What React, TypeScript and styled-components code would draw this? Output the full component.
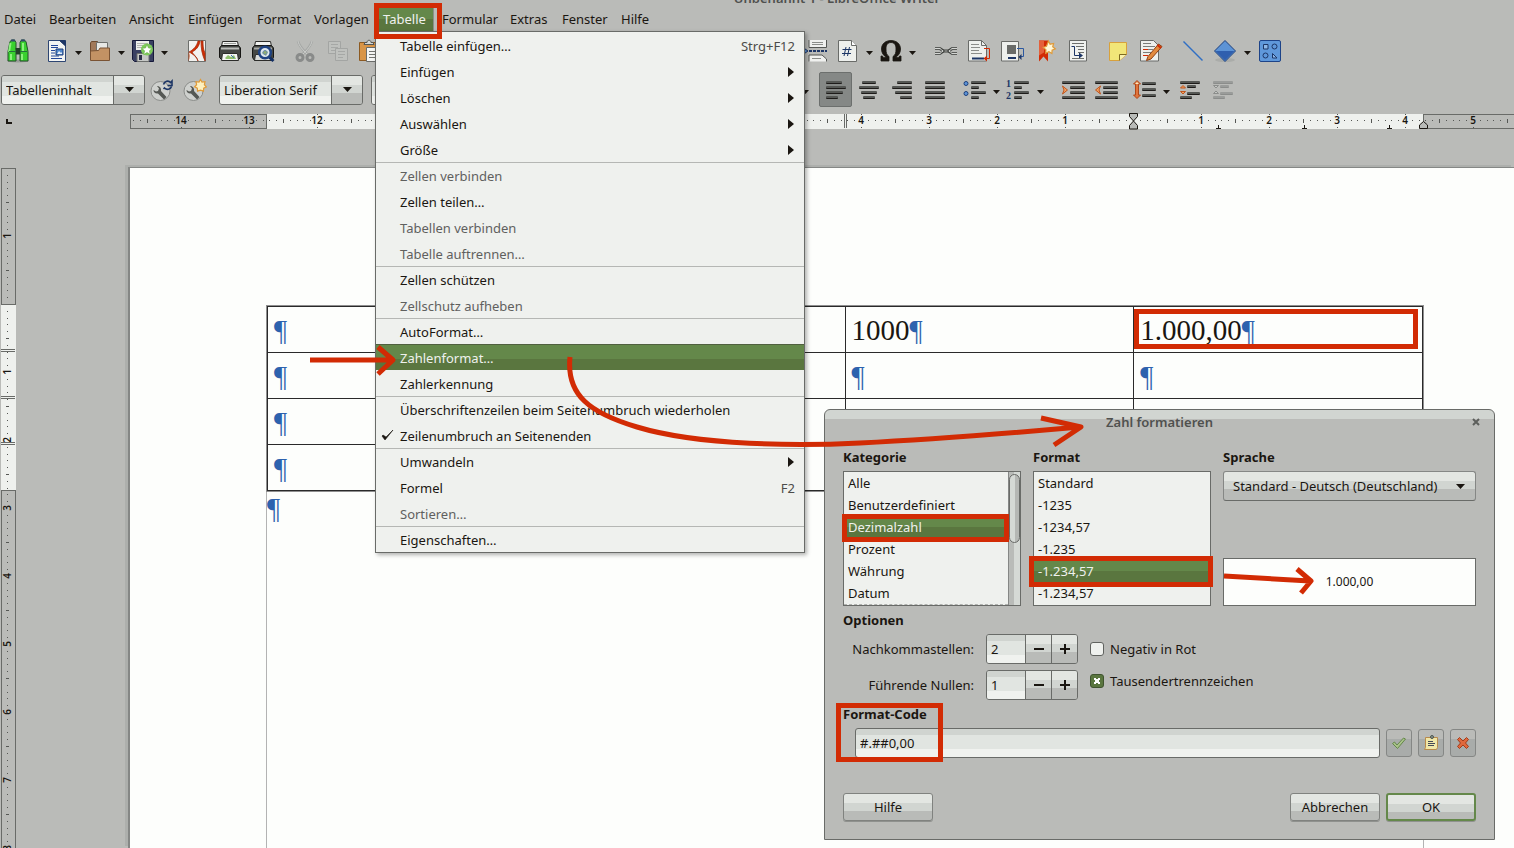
import React from "react";
import styled, { createGlobalStyle, css } from "styled-components";

const c = {
  chrome: "#babbb8",
  light: "#eff1ee",
  edge: "#696b68",
  line: "#b5b7b4",
  ink: "#1a1611",
  faint: "#5f605e",
  green: "#64884a",
  greenDark: "#5a763f",
  red: "#d22b04",
  mark: "#2d62ae",
};

const GlobalStyle = createGlobalStyle`
  *, *::before, *::after { box-sizing: border-box; }
  body { margin: 0; background: ${c.chrome}; overflow: hidden; }
  body, button, input, select {
    font-family: "Noto Sans", "Open Sans", sans-serif;
    font-size: 13px;
    line-height: 18px;
    color: ${c.ink};
  }
  button, input, select { margin: 0; padding: 0; border: 0; outline: 0; }
  ul { list-style: none; margin: 0; padding: 0; }
`;

const Shell = styled.div`
  position: relative;
  display: flex;
  flex-direction: column;
  height: 100vh;
  overflow: hidden;
`;

const TitleBar = styled.header`
  display: flex;
  flex: none;
  align-items: flex-end;
  justify-content: center;
  height: 7px;
  padding: 0 0 3px 160px;
  overflow: hidden;
  font-size: 13px;
  font-weight: 600;
  line-height: 12px;
  color: #4f504e;
`;

const MenuBar = styled.nav`
  display: flex;
  flex: none;
  height: 24px;
`;

const MenuTitle = styled.button<{ $w: number; $open?: boolean }>`
  flex: none;
  width: ${(p) => p.$w}px;
  padding: 0 4px;
  background: none;
  text-align: left;
  white-space: nowrap;
  ${(p) =>
    p.$open &&
    css`
      margin-right: 4px;
      color: ${c.light};
      background: linear-gradient(${c.green} 12px, ${c.greenDark} 12px);
      border-right: 1px solid #8b8f88;
    `}
`;

const Toolbar = styled.div`
  display: flex;
  flex: none;
  align-items: center;
  height: 39px;
  padding-left: 1px;
`;

const Tool = styled.button<{ $pressed?: boolean }>`
  display: flex;
  flex: none;
  align-items: center;
  justify-content: center;
  width: 33px;
  height: 35px;
  background: none;
  border-radius: 2px;
  ${(p) =>
    p.$pressed &&
    css`
      background: #858886;
      border: 1px solid #6c6f6d;
    `}
  svg { display: block; flex: none; }
`;

const DropArrow = styled.button`
  flex: none;
  display: flex;
  align-items: center;
  justify-content: center;
  width: 10px;
  height: 35px;
  padding-top: 4px;
  background: none;
`;

const Space = styled.span<{ $w: number }>`
  flex: none;
  width: ${(p) => p.$w}px;
`;

const fieldFill = css`
  background: linear-gradient(#d0d4d0 6px, #e1e5e1 6px, #e1e5e1 20px, #f0f2ef 20px);
`;
const buttonFill = css`
  background: linear-gradient(#e3e6e2 9px, #d1d5d1 9px, #d1d5d1 17px, #b9bbb8 17px);
`;

const Combo = styled.div`
  display: flex;
  flex: none;
  height: 30px;
  border: 1px solid ${c.edge};
  border-radius: 3px;
  overflow: hidden;
`;

const ComboInput = styled.input`
  width: 111px;
  padding-left: 4px;
  ${fieldFill}
`;

const ComboButton = styled.button`
  display: flex;
  align-items: center;
  justify-content: center;
  width: 31px;
  border-left: 1px solid ${c.edge};
  ${buttonFill}
`;

const RulerRow = styled.div`
  flex: none;
  height: 21px;
  padding-top: 1px;
  svg { display: block; width: 100%; height: 20px; }
`;

const Workspace = styled.main`
  display: flex;
  flex: 1;
  min-height: 0;
  padding-top: 37px;
`;

const SideRuler = styled.div`
  flex: none;
  width: 17px;
  padding-top: 1px;
  svg { display: block; width: 17px; height: 100%; }
`;

const Page = styled.section`
  flex: 1;
  margin-left: 111px;
  padding: 138px 90px 0 136px;
  background: #fdfefc;
  border-top: 1px solid #858785;
  border-left: 2px solid #858785;
  box-shadow: -3px -2px 0 #adafac;
`;

const TextArea = styled.div`
  height: 100%;
  border-left: 1px solid #b3b3b3;
  border-right: 1px solid #b3b3b3;
  font-family: "Liberation Serif", serif;
  font-size: 29px;
  line-height: 34px;
`;

const DocTable = styled.table`
  width: 100%;
  border-collapse: collapse;
  table-layout: fixed;
  border: 1px solid #2a2a2a;
  outline: 1px solid #8f8f8f;
`;

const Cell = styled.td`
  position: relative;
  height: 46px;
  padding: 0 6px;
  border: 1px solid #2a2a2a;
`;

const Pilcrow = styled.span`
  color: ${c.mark};
`;

const Mark = styled.span<{ $inset: string }>`
  position: absolute;
  inset: ${(p) => p.$inset};
  z-index: 3;
  border: 5px solid ${c.red};
  pointer-events: none;
`;

const MenuMark = styled.span`
  position: absolute;
  top: 3px;
  left: 374px;
  z-index: 5;
  width: 68px;
  height: 36px;
  border: 5px solid ${c.red};
  pointer-events: none;
`;

const Menu = styled.ul`
  position: absolute;
  top: 31px;
  left: 375px;
  z-index: 2;
  width: 430px;
  background: ${c.light};
  border: 1px solid ${c.edge};
  box-shadow: 2px 2px 4px rgba(0, 0, 0, 0.3);
`;

const MenuItem = styled.button<{ $active?: boolean; $rule?: boolean }>`
  display: grid;
  grid-template-columns: 24px 1fr auto;
  align-items: center;
  width: 100%;
  height: 26px;
  padding-right: 9px;
  background: none;
  border-top: 1px solid ${(p) => (p.$rule ? c.line : "transparent")};
  text-align: left;
  &:disabled { color: ${c.faint}; }
  ${(p) =>
    p.$active &&
    css`
      color: ${c.light};
      background: linear-gradient(${c.green} 14px, ${c.greenDark} 14px);
      border-top-color: #50603f;
    `}
`;

const Shortcut = styled.span`
  color: #4c4c4a;
`;

const Dialog = styled.section`
  position: absolute;
  top: 409px;
  left: 824px;
  z-index: 3;
  width: 671px;
  padding: 0 18px 18px;
  background: linear-gradient(#d1d5d1 9px, ${c.chrome} 9px);
  border: 1px solid ${c.edge};
  border-radius: 6px 6px 0 0;
`;

const DialogHead = styled.header`
  position: relative;
  height: 38px;
  padding-top: 3px;
  text-align: center;
  font-size: 13px;
  font-weight: 600;
  color: #50514f;
`;

const CloseButton = styled.button`
  position: absolute;
  top: 6px;
  right: -6px;
  width: 12px;
  height: 12px;
  background: none;
  svg { display: block; }
`;

const Columns = styled.div`
  display: grid;
  grid-template-columns: 178px 178px 1fr;
  gap: 12px;
  margin-bottom: 5px;
`;

const Heading = styled.h2`
  display: block;
  margin: 0 0 5px;
  font-size: 13px;
  font-weight: 700;
  line-height: 18px;
`;

const Column = styled.div`
  display: flex;
  flex-direction: column;
`;

const ListFrame = styled.div`
  display: flex;
  height: 135px;
  background: ${c.light};
  border: 1px solid ${c.edge};
`;

const List = styled.ul<{ $more?: boolean }>`
  flex: 1;
  ${(p) => p.$more && css`border-bottom: 1px dashed #b0b2af;`}
`;

const Option = styled.li<{ $selected?: boolean }>`
  position: relative;
  height: 22px;
  padding: 2px 4px;
  ${(p) =>
    p.$selected &&
    css`
      color: ${c.light};
      background: linear-gradient(${c.green} 11px, ${c.greenDark} 11px);
    `}
`;

const Scrollbar = styled.div`
  width: 12px;
  padding-top: 2px;
  background: linear-gradient(90deg, #b9bbb8 5px, #d5d9d5 5px);
  border-left: 1px solid #858785;
`;

const Thumb = styled.div`
  height: 69px;
  border: 1px solid ${c.edge};
  border-radius: 6px;
  background: linear-gradient(90deg, #d5d9d5 5px, #b5b7b4 5px);
`;

const SelectWrap = styled.div`
  position: relative;
  svg { position: absolute; right: 11px; top: 13px; pointer-events: none; }
`;

const Select = styled.select`
  width: 100%;
  height: 30px;
  padding: 0 30px 0 9px;
  appearance: none;
  border: 1px solid #858785;
  border-bottom-color: ${c.edge};
  border-radius: 3px;
  ${buttonFill}
`;

const Preview = styled.output`
  display: flex;
  align-items: center;
  justify-content: center;
  height: 48px;
  margin-top: auto;
  font-size: 12px;
  background: #fdfefc;
  border: 1px solid ${c.edge};
`;

const Options = styled.div`
  display: flex;
  gap: 12px;
  margin-bottom: 5px;
`;

const SpinGrid = styled.div`
  display: grid;
  grid-template-columns: 131px 92px;
  gap: 6px 12px;
  align-items: center;
`;

const SpinLabel = styled.label`
  text-align: right;
`;

const SpinBox = styled(Combo)`
  button { width: 26px; }
`;

const SpinInput = styled.input`
  width: 38px;
  padding-left: 4px;
  ${fieldFill}
`;

const Checks = styled.div`
  display: grid;
  grid-auto-rows: 30px;
  gap: 2px;
`;

const CheckLabel = styled.label`
  display: flex;
  gap: 6px;
  align-items: center;
`;

const Check = styled.input`
  width: 14px;
  height: 14px;
  appearance: none;
  background: ${c.light};
  border: 1px solid #60625f;
  border-radius: 3px;
  &:checked {
    background:
      linear-gradient(45deg, transparent 40%, #fff 40%, #fff 60%, transparent 60%) center / 6px 6px no-repeat,
      linear-gradient(-45deg, transparent 40%, #fff 40%, #fff 60%, transparent 60%) center / 6px 6px no-repeat,
      ${c.greenDark};
    border-color: #40542f;
  }
`;

const CodeBlock = styled.div`
  position: relative;
`;

const CodeRow = styled.div`
  display: flex;
  align-items: center;
  gap: 6px;
  padding-left: 12px;
`;

const CodeInput = styled.input`
  flex: 1;
  height: 30px;
  padding-left: 4px;
  border: 1px solid ${c.edge};
  border-radius: 3px;
  ${fieldFill}
`;

const IconButton = styled.button`
  display: flex;
  align-items: center;
  justify-content: center;
  width: 26px;
  height: 28px;
  border: 1px solid #858785;
  border-radius: 3px;
  background: linear-gradient(${c.chrome} 9px, #a9acaa 9px);
`;

const CodeMark = styled.span`
  position: absolute;
  top: -2px;
  left: -7px;
  width: 107px;
  height: 59px;
  border: 5px solid ${c.red};
  pointer-events: none;
`;

const Footer = styled.footer`
  display: flex;
  gap: 6px;
  margin-top: 35px;
`;

const PushButton = styled.button<{ $primary?: boolean; $left?: boolean }>`
  width: 90px;
  height: 28px;
  border: ${(p) => (p.$primary ? "2px solid " + c.green : "1px solid #80827f")};
  border-radius: 3px;
  margin-right: ${(p) => (p.$left ? "auto" : "0")};
  box-shadow: 0 1px 0 #8f918e;
  ${buttonFill}
`;

const Annotations = styled.svg`
  position: absolute;
  top: 0;
  left: 0;
  z-index: 6;
  pointer-events: none;
  overflow: visible;
`;

/* ---------- icons ---------- */

const Icon = ({ children }: { children: React.ReactNode }) => (
  <svg width="24" height="24" viewBox="0 0 24 24" fill="none" aria-hidden="true">
    {children}
  </svg>
);

const Down = () => (
  <svg width="9" height="5" viewBox="0 0 9 5" aria-hidden="true">
    <path d="M0 0h9L4.5 5z" fill={c.ink} />
  </svg>
);

const SmallDown = () => (
  <svg width="7" height="4" viewBox="0 0 7 4" aria-hidden="true">
    <path d="M0 0h7L3.5 4z" fill={c.ink} />
  </svg>
);

const Bar = ({ x, y, w, o }: { x: number; y: number; w: number; o?: boolean }) => (
  <>
    <rect x={x} y={y} width={w} height="2" rx="1" fill={o ? "#8b8d8b" : "#1e1c1a"} />
    <rect x={x} y={y - 1} width={w} height="2" rx="1" fill={o ? "#9a9c9a" : "#555754"} />
  </>
);

const icons: Record<string, React.ReactNode> = {
  binoculars: (
    <>
      <ellipse cx="12" cy="22" rx="11" ry="1.500" fill="#999b98" />
      <path d="M4 2.500l2-1.500h2.500L10 3.500v7h4v-7l1.500-2.500H18l2 1.500 2 10v9.500h-8v-7h-4v7H2v-9.500z" fill="#39d12f" stroke="#24502a" />
      <path d="M4.500 4l-1.500 9M5 15v6M16 15v6M17 4v8" stroke="#8cf27d" strokeWidth="2" />
      <path d="M9.500 9h5v6h-5z" fill="#24402a" />
      <path d="M3 12.500h7M14 12.500h7" stroke="#24703a" />
      <path d="M5 1.500h4M15 1.500h4" stroke="#334a6b" strokeWidth="2" />
    </>
  ),
  newDoc: (
    <>
      <path d="M3.500 1.500h12l5 4.500v16.500h-17z" fill="#f4f5f3" stroke="#2e4673" />
      <path d="M14.500 1.500h6V7z" fill="#1d3666" stroke="#1d3666" />
      <path d="M6 6.500h7M6 8.500h7M6 11.500h4M6 14h4M6 17h8M6 19.500h11" stroke="#24489a" />
      <path d="M11 10h7v6h-7z" fill="#5087cc" stroke="#1f3c78" />
      <path d="M12 15l2-3 2 2 1-1v2z" fill="#e8f0fa" />
    </>
  ),
  folder: (
    <>
      <path d="M2.500 20V4l1-1.500h6l1.500 2h8.500v5" fill="#a1795a" stroke="#6d4a30" />
      <path d="M8.500 3.500h11v8h-11z" fill="#e8e8e5" stroke="#6f706d" />
      <path d="M2.500 21.500V12l8-.5 1.500-2.500h9.500v12.500z" fill="#c39264" stroke="#7a5334" />
    </>
  ),
  save: (
    <>
      <path d="M1.500 1.500h21v21h-19l-2-2z" fill="#3a4062" stroke="#16193a" />
      <path d="M5 2h13v9H5z" fill="#edeeec" />
      <path d="M6 4.500h11M6 6.500h11M6 8.500h11" stroke="#b4b6b4" />
      <path d="M6 14.500h12v8H6z" fill="#c6c8c6" stroke="#6b6d6b" />
      <path d="M8 16h3v5H8z" fill="#2b2f48" />
      <circle cx="16" cy="10.500" r="6" fill="#7ecb5c" />
      <path d="M16 5.500l1.500 3.500 3.800.3-2.900 2.500.9 3.700-3.300-2-3.300 2 .9-3.700-2.900-2.500 3.800-.3z" fill="#fff" stroke="#5ea83c" strokeWidth=".6" />
    </>
  ),
  pdf: (
    <>
      <path d="M3.500 1.500h17v21h-17z" fill="#f2f2f0" stroke="#6d6f6c" />
      <path d="M13 2c-1 5-5 9-9 11 4 2 8 5 9 9-1-4-5-7-6-9 4-2 7-5 8-11zM16 2c0 8 1 13 4 20V14c-2-4-2-8-2-12z" fill="#d22b04" stroke="#a5310f" strokeWidth=".8" />
      <path d="M3.500 22.500C5 18 5 15 3.500 13z" fill="#b84d25" />
    </>
  ),
  print: (
    <>
      <path d="M4.500 2.500h15l1 5h-17z" fill="#f0f1ef" stroke="#2c2c2a" />
      <path d="M6 4.500h12" stroke="#9b9d9a" />
      <path d="M1.500 9l2-2.500h17l2 2.500v9.500l-2 2h-17l-2-2z" fill="#454744" stroke="#161614" />
      <path d="M3 9.500h18" stroke="#bcbebb" strokeWidth="2" />
      <path d="M4.500 14.500h15l1 7h-17z" fill="#f5f6f4" stroke="#2c2c2a" />
      <path d="M7 19l3-3 3 2 3-2 2 4H8z" fill="#8fbf6c" />
      <path d="M13 16l3 3" stroke="#3c6fb4" />
    </>
  ),
  preview: (
    <>
      <path d="M4.500 2.500h15l1 5h-17z" fill="#f0f1ef" stroke="#2c2c2a" />
      <path d="M1.500 9l2-2.500h17l2 2.500v9.500l-2 3h-17l-2-3z" fill="#454744" stroke="#161614" />
      <path d="M3 9.500h18" stroke="#a8aaa7" strokeWidth="2" />
      <path d="M4.500 15.500h15l1 6h-17z" fill="#d9dbd8" stroke="#2c2c2a" />
      <path d="M18 18l4.500 4" stroke="#122e63" strokeWidth="3" />
      <circle cx="14" cy="13.500" r="5.800" fill="#dfe8ef" stroke="#1f4382" strokeWidth="2.500" />
      <path d="M11 14l3-3 3 2-2 4z" fill="#8fae70" />
      <circle cx="14" cy="13.500" r="2" stroke="#6a8cb0" />
    </>
  ),
  cut: (
    <>
      <path d="M5 2c1 5 5 9 9 13M19 2c-1 5-5 9-9 13" stroke="#a5a7a5" strokeWidth="2.500" />
      <path d="M5 2c1 5 5 9 9 13M19 2c-1 5-5 9-9 13" stroke="#cccecb" />
      <circle cx="7" cy="18.500" r="3" stroke="#898b8a" strokeWidth="3" />
      <circle cx="17" cy="18.500" r="3" stroke="#898b8a" strokeWidth="3" />
    </>
  ),
  copy: (
    <>
      <path d="M2.500 2.500h12v12h-12z" fill="#bfc1be" stroke="#a3a5a3" />
      <path d="M5 5.500h7M5 8.500h7M5 11.500h4" stroke="#a6a8a6" />
      <path d="M9.500 9.500h12v12h-12z" fill="#bfc1be" stroke="#a3a5a3" />
      <path d="M12 12.500h7M12 15.500h7M12 18.500h5" stroke="#a6a8a6" />
    </>
  ),
  paste: (
    <>
      <path d="M.5 3.500h19v18H.5z" fill="#d99547" stroke="#8c5a22" />
      <path d="M5 5.500l1-2h2c0-3 4-3 4 0h2l1 2z" fill="#d5d7d4" stroke="#555754" />
      <path d="M7.500 8.500h14v14h-14z" fill="#f4f5f3" stroke="#6b6d6a" />
      <path d="M10 12.500h9M10 15.500h9M10 18.500h6" stroke="#72746f" />
    </>
  ),
  pageBreak: (
    <>
      <path d="M6 1v7.500h17.500V1M6 22.500V16h13l4.500 4v2.500" fill="#f0f1ef" stroke="#555754" />
      <path d="M9 3.500h11M9 5.500h11M9 19.500h9" stroke="#8b8d8a" />
      <path d="M0 8.500l5 3.500-5 3.500z" fill="#5c93d6" stroke="#1d3666" />
      <path d="M6 12h18" stroke="#1d3666" strokeWidth="2" strokeDasharray="3 1" />
    </>
  ),
  field: (
    <>
      <path d="M2.500 1.500h13l5 5v16h-18z" fill="#eef0ed" stroke="#696b68" />
      <path d="M15.500 1.500v5h5" stroke="#696b68" fill="#fff" />
      <path d="M10 8l-2 9M13.500 8l-2 9M6.500 10.500h9M6 14.500h9" stroke="#1d3666" strokeWidth="1" />
    </>
  ),
  omega: (
    <path d="M2 22v-5h1.500c.3 1.300.8 1.500 2 1.500h2C4.500 16.500 2.500 14 2.500 10 2.500 5 6.500 1.500 12 1.500S21.500 5 21.500 10c0 4-2 6.500-5 8.500h2c1.200 0 1.700-.2 2-1.500H22v5h-8v-4.500c2.500-1.500 3-4 3-7.500 0-4-1.500-6.500-5-6.500S7 6 7 10c0 3.500.5 6 3 7.500V22z" fill={c.ink} stroke={c.ink} strokeWidth=".8" />
  ),
  link: (
    <>
      <path d="M1 9.500h5l3 2.500-3 2.500H1M23 9.500h-5l-3 2.500 3 2.500h5" stroke="#5a5c59" strokeWidth="3" />
      <path d="M1 9.500h5l3 2.500-3 2.500H1M23 9.500h-5l-3 2.500 3 2.500h5" stroke="#d4d6d3" />
      <path d="M7 9.500l3 1.500h4l3-1.500M7 14.500l3-1.500h4l3 1.500" stroke="#3e403d" />
    </>
  ),
  footnote: (
    <>
      <path d="M1.500 1.500h13l5 5v15.500h-18z" fill="#eef0ed" stroke="#696b68" />
      <path d="M14.500 1.500v5h5" stroke="#696b68" />
      <path d="M4 5.500h8M4 8.500h9M4 11.500h8M4 14.500h11" stroke="#8b8d8a" />
      <path d="M5 19.500h12" stroke="#1d3666" strokeWidth="2" />
      <path d="M17 9.500h5.500v10H18" stroke={c.red} strokeWidth="1" />
      <path d="M20 16.500l-3.500 3 3.500 3z" fill={c.red} />
    </>
  ),
  endnote: (
    <>
      <path d="M1.500 2.500h17v19.500h-17z" fill="#eef0ed" stroke="#696b68" />
      <path d="M7 6h9v9H7z" fill="#696b68" />
      <path d="M8 19h8" stroke="#1d3666" strokeWidth="2" />
      <path d="M17 9.500h6.500v8H20" stroke="#2b57a0" strokeWidth="1" />
      <path d="M21.500 15l-3 3 3 3z" fill="#1d3666" />
    </>
  ),
  bookmark: (
    <>
      <path d="M6 1.500h9v21l-4.500-5-4.500 5z" fill="#d22b04" />
      <path d="M6 1.500h5v12l-5 3z" fill="#e4603a" />
      <path d="M15.500 2l1.600 3.200 3.500-.7-.9 3.300 2.600 2-3.200 1.400-.2 3.300-3-1.800-3.200 1.500.2-3.500-2.600-2.200 3.200-1.200z" fill="#fff7d8" stroke="#e09a38" strokeWidth="1.200" />
    </>
  ),
  crossref: (
    <>
      <path d="M3.500 1.500h17v20.500h-17z" fill="#f0f2ef" stroke="#696b68" />
      <path d="M6 4.500h12M10 7.500h8M12 10.500h6M12 13.500h6M6 19.500h12" stroke="#6d6f6c" />
      <path d="M5.500 7.500h3v9h5" stroke="#1d3666" strokeWidth="1" />
      <path d="M13 13.500l4 3-4 3z" fill="#1d3666" />
    </>
  ),
  note: (
    <>
      <path d="M3.500 3.500h17v12l-7 6h-10z" fill="#f1e678" stroke="#d8a13c" />
      <path d="M20.500 15.500h-7v6" fill="#f8f2b0" stroke="#7d6a20" />
    </>
  ),
  track: (
    <>
      <path d="M1.500 1.500h13l5 5v15.500h-18z" fill="#eef0ed" stroke="#696b68" />
      <path d="M4 4.500h8M4 7.500h12M4 10.500h10M4 13.500h8M4 16.500h4" stroke="#7b7d7a" />
      <path d="M4 10.500h5M4 16.500h5" stroke={c.red} />
      <path d="M7.500 21.500l1.500-4L19.500 5l3.500 2.500L12 20z" fill="#e28a3e" stroke="#8e3f14" />
      <path d="M18.500 6l3.500 3" stroke="#d22b04" strokeWidth="2" />
    </>
  ),
  line: <path d="M2.500 2.500l19 19" stroke="#2f6fc4" strokeWidth="1.500" />,
  diamond: (
    <>
      <ellipse cx="11" cy="21" rx="10" ry="2" fill="#aaaca9" />
      <path d="M11 1.500L21.500 12 11 22.500.5 12z" fill="#5c93d6" stroke="#1d3f7c" />
      <path d="M1.500 12h19L11 21.500z" fill="#2f5fae" />
    </>
  ),
  shapes: (
    <>
      <rect x="1.500" y="1.500" width="21" height="21" rx="1.500" fill="#5f98da" stroke="#1d4388" />
      <path d="M5.500 5.500h4.500v4.500H5.500zM14.500 14.500v4.500H19z" stroke="#1d3666" fill="#8db8e8" />
      <circle cx="16.500" cy="7.500" r="2.500" stroke="#1d3666" />
      <circle cx="7.500" cy="16.500" r="2.500" stroke="#1d3666" />
    </>
  ),
  alignLeft: (
    <><Bar x={2} y={4} w={16} /><Bar x={2} y={9} w={20} /><Bar x={2} y={14} w={17} /><Bar x={2} y={19} w={12} /></>
  ),
  alignCenter: (
    <><Bar x={5} y={4} w={14} /><Bar x={2} y={9} w={20} /><Bar x={4} y={14} w={16} /><Bar x={6} y={19} w={12} /></>
  ),
  alignRight: (
    <><Bar x={7} y={4} w={15} /><Bar x={2} y={9} w={20} /><Bar x={5} y={14} w={17} /><Bar x={10} y={19} w={12} /></>
  ),
  justify: (
    <><Bar x={2} y={4} w={20} /><Bar x={2} y={9} w={20} /><Bar x={2} y={14} w={20} /><Bar x={2} y={19} w={20} /></>
  ),
  bullets: (
    <>
      <circle cx="3" cy="5.500" r="2" fill="#5c93d6" stroke="#1d3f7c" />
      <circle cx="3" cy="15.500" r="2" fill="#5c93d6" stroke="#1d3f7c" />
      <Bar x={8} y={4} w={15} /><Bar x={8} y={9} w={8} /><Bar x={8} y={14} w={15} /><Bar x={8} y={19} w={8} />
    </>
  ),
  numbers: (
    <>
      <text x="0" y="9" fontSize="10" fontWeight="700" fill="#1d3666" fontFamily="Liberation Serif, serif">1</text>
      <text x="0" y="21" fontSize="10" fontWeight="700" fill="#1d3666" fontFamily="Liberation Serif, serif">2</text>
      <Bar x={8} y={4} w={15} /><Bar x={8} y={9} w={8} /><Bar x={8} y={14} w={15} /><Bar x={8} y={19} w={8} />
    </>
  ),
  indent: (
    <>
      <Bar x={1} y={4} w={23} /><Bar x={9} y={9} w={15} /><Bar x={9} y={14} w={15} /><Bar x={1} y={19} w={23} />
      <path d="M1.500 8l5 4-5 4 1.500-4z" fill="#f0a060" stroke="#c0541c" />
    </>
  ),
  outdent: (
    <>
      <Bar x={1} y={4} w={23} /><Bar x={9} y={9} w={15} /><Bar x={9} y={14} w={15} /><Bar x={1} y={19} w={23} />
      <path d="M6.500 8l-5 4 5 4-1.500-4z" fill="#f0a060" stroke="#c0541c" />
    </>
  ),
  spacing: (
    <>
      <Bar x={10} y={5} w={14} /><Bar x={10} y={11} w={14} /><Bar x={10} y={17} w={14} />
      <path d="M5 2.500l3.500 3.500H6.500v11h2L5 20.500 1.500 17h2V6h-2z" fill="#e0743c" stroke="#b0481a" />
      <path d="M3 6l2-2 2 2z" fill="#f8e8c0" />
    </>
  ),
  paraUp: (
    <>
      <Bar x={2} y={4} w={20} /><Bar x={9} y={8} w={9} /><Bar x={9} y={15} w={13} /><Bar x={2} y={19} w={12} />
      <path d="M5 7.500l2.500 2.500h-5zM5 16l2.500-2.500h-5z" fill="#f0a060" stroke="#c0541c" />
    </>
  ),
  paraDown: (
    <>
      <Bar o x={2} y={4} w={20} /><Bar o x={9} y={8} w={9} /><Bar o x={9} y={15} w={13} /><Bar o x={2} y={19} w={12} />
      <path d="M5 10l2.500-2.500h-5zM5 13l2.500 2.500h-5z" fill="#c4c6c3" stroke="#8b8d8b" />
    </>
  ),
  styleUpdate: (
    <>
      <circle cx="10.500" cy="13" r="9.500" fill="#cfd1ce" stroke="#8b8d8a" />
      <path d="M3.500 12c0 2.500 2 4 4.500 3.500l6 6 2.500-2.500-5.500-6c.5-2.500-1-5-4-5l2 2.500-1 2.500-2 .5z" fill="#555854" />
      <path d="M13.500 6.500c1-3.500 5-4.500 7-2l1.500-1.500v4.500h-4.500M21.500 8.500c-1 3.500-5 3.500-7 1.500l-1 1" stroke="#1d3666" strokeWidth="1.600" />
    </>
  ),
  styleNew: (
    <>
      <circle cx="10.500" cy="13" r="9.500" fill="#cfd1ce" stroke="#8b8d8a" />
      <path d="M3.500 12c0 2.500 2 4 4.500 3.500l6 6 2.500-2.500-5.500-6c.5-2.500-1-5-4-5l2 2.500-1 2.500-2 .5z" fill="#555854" />
      <path d="M17.500 1.500l1.500 2.500 3-.3-.6 3 2 2.200-2.700 1.300-.3 2.900-2.900-1-2.900 1-.3-2.900-2.700-1.300 2-2.200-.6-3 3 .3z" fill="#fdf0c0" stroke="#e09a38" strokeWidth="1.200" />
    </>
  ),
};

type Entry = string | number;

/* A string names a tool, "v" is a drop-down arrow, a number is a gap in pixels. */
const standardTools: Entry[] = [
  "binoculars", 6, "newDoc", "v", "folder", "v", "save", "v", 11, "pdf", "print", "preview", 9, "cut", "copy",
  "paste", 411, "pageBreak", "field", "v", "omega", "v", 12, "link", "footnote", "endnote", "bookmark", "crossref", 7,
  "note", "track", 9, "line", "diamond", "v", 1, "shapes",
];

const formatTools: Entry[] = [
  "alignLeft", "alignCenter", "alignRight", "justify", 7, "bullets", "v", "numbers", 1, "v", 11, "indent", "outdent", 5,
  "spacing", 1, "v", 2, "paraUp", "paraDown",
];

const ToolSet = ({ entries }: { entries: Entry[] }) => (
  <>
    {entries.map((e, i) =>
      typeof e === "number" ? (
        <Space key={i} $w={e} />
      ) : e === "v" ? (
        <DropArrow key={i} aria-label="Mehr"><SmallDown /></DropArrow>
      ) : (
        <Tool key={i} aria-label={e} $pressed={e === "alignLeft"}><Icon>{icons[e]}</Icon></Tool>
      )
    )}
  </>
);

const ComboBox = ({ label, value }: { label: string; value: string }) => (
  <Combo>
    <ComboInput aria-label={label} defaultValue={value} />
    <ComboButton aria-label={label + " öffnen"}><Down /></ComboButton>
  </Combo>
);

/* ---------- rulers ---------- */

const CM = 68;
const range = (from: number, to: number) => Array.from({ length: to - from + 1 }, (_, i) => from + i);

const tickList = (zero: number, start: number, end: number) =>
  range(Math.ceil(((start - zero) * 10) / CM), Math.floor(((end - zero) * 10) / CM)).filter((n) => n % 10 !== 0);

const TopRuler = () => (
  <RulerRow>
    <svg aria-hidden="true" shapeRendering="crispEdges">
      <path d="M6 9v5h6v-2H8v-3z" fill={c.ink} />
      <rect x="267" y="4" width="1156" height="15" fill={c.light} />
      <rect x="130.500" y="4.500" width="136" height="14" fill="none" stroke={c.edge} />
      <path d="M1423.500 4.500H3000M1423.500 18.500H3000M1423.500 4v14" fill="none" stroke={c.edge} />
      {tickList(1133, 132, 1600).map((n) => {
        const x = Math.round(1133 + (n * CM) / 10);
        const half = n % 5 === 0;
        return <rect key={n} x={x} y={half ? 9 : 10} width="1" height={half ? 4 : 1} fill="#555754" />;
      })}
      {range(-14, 5).filter((n) => n !== 0).map((n) => {
        const x = 1133 + n * CM;
        return (
          <g key={n}>
            <rect x={x} y="4" width="1" height="1" fill="#555754" />
            <rect x={x} y="17" width="1" height="1" fill="#555754" />
            <text x={x} y="14" fontSize="10" fontWeight="600" textAnchor="middle" fill={c.ink}>{Math.abs(n)}</text>
          </g>
        );
      })}
      <path d="M844.500 4v14M846.500 4v14" stroke={c.edge} />
      <path d="M1218.500 15v3M1216 18.500h5M1304.500 15v3M1302 18.500h5M1389.500 15v3M1387 18.500h5" stroke={c.ink} />
      <g shapeRendering="auto" fill="#b9bbb8" stroke={c.ink} strokeWidth="1">
        <path d="M1129.500 3.500h8v3l-4 4.500-4-4.500zM1129.500 19v-3.500l4-4.500 4 4.500V19z" />
        <path d="M1419.500 18.500v-3.500l4-3.500 4 3.500v3.500z" />
      </g>
    </svg>
  </RulerRow>
);

const LeftRuler = () => (
  <SideRuler>
    <svg aria-hidden="true" shapeRendering="crispEdges">
      <rect x="1.500" y=".5" width="14" height="136" fill="none" stroke={c.edge} />
      <rect x="1" y="137" width="15" height="185" fill={c.light} />
      <rect x="1.500" y="322.500" width="14" height="2000" fill="none" stroke={c.edge} />
      {tickList(136, 4, 1400).map((n) => {
        const y = Math.round(136 + (n * CM) / 10);
        const half = n % 5 === 0;
        return <rect key={n} x={half ? 6 : 7} y={y} width={half ? 3 : 1} height="1" fill="#555754" />;
      })}
      {range(-1, 18).filter((n) => n !== 0).map((n) => {
        const y = 136 + n * CM;
        return (
          <text key={n} fontSize="10" fontWeight="600" textAnchor="middle" fill={c.ink} transform={`translate(11 ${y}) rotate(-90)`}>
            {Math.abs(n)}
          </text>
        );
      })}
      <path d="M1 181.500h14M1 183.500h14M1 228.500h14M1 230.500h14M1 274.500h14M1 276.500h14" stroke={c.edge} />
    </svg>
  </SideRuler>
);

/* ---------- data ---------- */

const menuTitles: [string, number][] = [
  ["Datei", 45], ["Bearbeiten", 80], ["Ansicht", 59], ["Einfügen", 69], ["Format", 57], ["Vorlagen", 69],
  ["Tabelle", 55], ["Formular", 68], ["Extras", 52], ["Fenster", 59], ["Hilfe", 45],
];

interface Item {
  text: string;
  sub?: boolean;
  keys?: string;
  off?: boolean;
  rule?: boolean;
  active?: boolean;
  checked?: boolean;
}

const items: Item[] = [
  { text: "Tabelle einfügen…", keys: "Strg+F12" },
  { text: "Einfügen", sub: true },
  { text: "Löschen", sub: true },
  { text: "Auswählen", sub: true },
  { text: "Größe", sub: true },
  { text: "Zellen verbinden", off: true, rule: true },
  { text: "Zellen teilen…" },
  { text: "Tabellen verbinden", off: true },
  { text: "Tabelle auftrennen…", off: true },
  { text: "Zellen schützen", rule: true },
  { text: "Zellschutz aufheben", off: true },
  { text: "AutoFormat…", rule: true },
  { text: "Zahlenformat…", active: true },
  { text: "Zahlerkennung" },
  { text: "Überschriftenzeilen beim Seitenumbruch wiederholen", rule: true },
  { text: "Zeilenumbruch an Seitenenden", checked: true },
  { text: "Umwandeln", sub: true, rule: true },
  { text: "Formel", keys: "F2" },
  { text: "Sortieren…", off: true },
  { text: "Eigenschaften…", rule: true },
];

const categories = ["Alle", "Benutzerdefiniert", "Dezimalzahl", "Prozent", "Währung", "Datum"];
const formats = ["Standard", "-1235", "-1234,57", "-1.235", "-1.234,57", "-1.234,57"];
const rows = [["", "", "1000", "1.000,00"], ["", "", "", ""], ["", "", "", ""], ["", "", "", ""]];

const Spinner = ({ id, label, value }: { id: string; label: string; value: string }) => (
  <>
    <SpinLabel htmlFor={id}>{label}</SpinLabel>
    <SpinBox>
      <SpinInput id={id} defaultValue={value} />
      <ComboButton aria-label="Weniger">
        <svg width="10" height="10"><path d="M0 5h10" stroke={c.ink} strokeWidth="2" /></svg>
      </ComboButton>
      <ComboButton aria-label="Mehr">
        <svg width="10" height="10"><path d="M0 5h10M5 0v10" stroke={c.ink} strokeWidth="2" /></svg>
      </ComboButton>
    </SpinBox>
  </>
);

const TableMenu = () => (
  <Menu role="menu">
    {items.map((it) => (
      <li key={it.text} role="none">
        <MenuItem role="menuitem" disabled={it.off} $active={it.active} $rule={it.rule}>
          <span>
            {it.checked && (
              <svg width="22" height="12" aria-hidden="true">
                <path d="M6 7l3 4 8-10-7 7-3-2z" fill={c.ink} stroke={c.ink} strokeWidth=".6" />
              </svg>
            )}
          </span>
          <span>{it.text}</span>
          {it.keys && <Shortcut>{it.keys}</Shortcut>}
          {it.sub && <svg width="7" height="10" aria-hidden="true"><path d="M0 0l6 5-6 5z" fill={c.ink} /></svg>}
        </MenuItem>
      </li>
    ))}
  </Menu>
);

const NumberDialog = () => (
  <Dialog role="dialog" aria-label="Zahl formatieren">
    <DialogHead>
      Zahl formatieren
      <CloseButton aria-label="Schließen">
        <svg width="12" height="12"><path d="M3 3l6 6M9 3l-6 6" stroke="#5d5f5c" strokeWidth="2" /></svg>
      </CloseButton>
    </DialogHead>
    <Columns>
      <Column>
        <Heading>Kategorie</Heading>
        <ListFrame>
          <List role="listbox" aria-label="Kategorie" $more>
            {categories.map((t, i) => (
              <Option key={t} role="option" aria-selected={i === 2} $selected={i === 2}>
                {t}
                {i === 2 && <Mark $inset="-2px -1px -4px -2px" />}
              </Option>
            ))}
          </List>
          <Scrollbar><Thumb /></Scrollbar>
        </ListFrame>
      </Column>
      <Column>
        <Heading>Format</Heading>
        <ListFrame>
          <List role="listbox" aria-label="Format">
            {formats.map((t, i) => (
              <Option key={i} role="option" aria-selected={i === 4} $selected={i === 4}>
                {t}
                {i === 4 && <Mark $inset="-4px -3px -5px -5px" />}
              </Option>
            ))}
          </List>
        </ListFrame>
      </Column>
      <Column>
        <Heading as="label" htmlFor="language">Sprache</Heading>
        <SelectWrap>
          <Select id="language"><option>Standard - Deutsch (Deutschland)</option></Select>
          <Down />
        </SelectWrap>
        <Preview>1.000,00</Preview>
      </Column>
    </Columns>
    <Heading>Optionen</Heading>
    <Options>
      <SpinGrid>
        <Spinner id="decimals" label="Nachkommastellen:" value="2" />
        <Spinner id="zeros" label="Führende Nullen:" value="1" />
      </SpinGrid>
      <Checks>
        <CheckLabel><Check type="checkbox" />Negativ in Rot</CheckLabel>
        <CheckLabel><Check type="checkbox" defaultChecked />Tausendertrennzeichen</CheckLabel>
      </Checks>
    </Options>
    <CodeBlock>
      <Heading as="label" htmlFor="code">Format-Code</Heading>
      <CodeRow>
        <CodeInput id="code" defaultValue="#.##0,00" />
        <IconButton aria-label="Hinzufügen">
          <svg width="16" height="16"><path d="M1.500 8.500l2-1.500 2.500 3 6.500-7 2 1L6.500 13.500z" fill="#a9c28a" stroke="#64884a" /></svg>
        </IconButton>
        <IconButton aria-label="Kommentar bearbeiten">
          <svg width="16" height="16">
            <path d="M2.500 2.500h12v10l-1 2h-12l1-2z" fill="#f0e7a8" stroke="#b88a4c" />
            <path d="M5 6.500h5M5 8.500h7M5 10.500h6" stroke="#454a58" />
            <circle cx="9" cy="2" r="1.500" fill="#8b9890" stroke="#4d544e" />
          </svg>
        </IconButton>
        <IconButton aria-label="Löschen">
          <svg width="16" height="16"><path d="M2.500 4.500l2-2 3.500 3.500 3.500-3.500 2 2L10.500 8l3 3.500-2 2L8 10l-3.500 3.500-2-2L5.500 8z" fill="#e0683c" stroke="#a33c1a" /></svg>
        </IconButton>
      </CodeRow>
      <CodeMark />
    </CodeBlock>
    <Footer>
      <PushButton $left>Hilfe</PushButton>
      <PushButton>Abbrechen</PushButton>
      <PushButton $primary>OK</PushButton>
    </Footer>
  </Dialog>
);

export default function App() {
  return (
    <>
      <GlobalStyle />
      <Shell>
        <TitleBar>Unbenannt 1 - LibreOffice Writer</TitleBar>
        <MenuBar>
          {menuTitles.map(([t, w]) => (
            <MenuTitle key={t} $w={w} $open={t === "Tabelle"}>{t}</MenuTitle>
          ))}
        </MenuBar>
        <Toolbar><ToolSet entries={standardTools} /></Toolbar>
        <Toolbar>
          <ComboBox label="Absatzvorlage" value="Tabelleninhalt" />
          <Tool aria-label="Vorlage aktualisieren"><Icon>{icons.styleUpdate}</Icon></Tool>
          <Tool aria-label="Neue Vorlage"><Icon>{icons.styleNew}</Icon></Tool>
          <Space $w={8} />
          <ComboBox label="Schriftname" value="Liberation Serif" />
          <Space $w={8} />
          <ComboBox label="Schriftgröße" value="" />
          <Space $w={285} />
          <DropArrow aria-label="Mehr"><SmallDown /></DropArrow>
          <Space $w={9} />
          <ToolSet entries={formatTools} />
        </Toolbar>
        <TopRuler />
        <Workspace>
          <LeftRuler />
          <Page>
            <TextArea>
              <DocTable>
                <tbody>
                  {rows.map((r, i) => (
                    <tr key={i}>
                      {r.map((v, j) => (
                        <Cell key={j}>
                          {v}<Pilcrow>¶</Pilcrow>
                          {i === 0 && j === 3 && <Mark $inset="2px 4px 3px 0" />}
                        </Cell>
                      ))}
                    </tr>
                  ))}
                </tbody>
              </DocTable>
              <Pilcrow>¶</Pilcrow>
            </TextArea>
          </Page>
        </Workspace>
        <TableMenu />
        <MenuMark />
        <NumberDialog />
        <Annotations width="1" height="1" fill="none" stroke={c.red} strokeWidth="5" strokeLinejoin="round" aria-hidden="true">
          <path d="M310 360h82M378 347l15 13-15 14" />
          <path d="M570 357C566 395 590 413 637 427C700 446 800 446 860 443C940 439 1000 434 1080 427M1041 418l40 9-27 18" />
          <path d="M1224 576l86 5M1297 569l14 12-10 12" />
        </Annotations>
      </Shell>
    </>
  );
}
